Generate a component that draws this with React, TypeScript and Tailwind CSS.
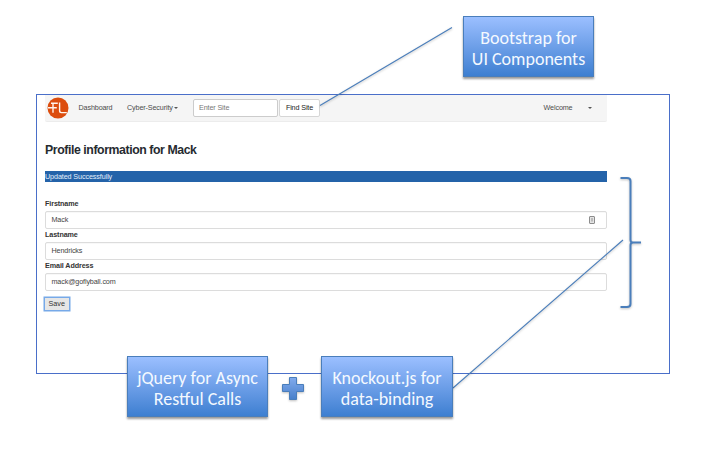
import type { ReactNode } from "react";

function Callout({ className, children }: { className: string; children: ReactNode }) {
  return (
    <div
      className={`absolute flex h-[61px] flex-col items-center justify-center border border-[#4a7ebb] bg-linear-to-b from-[#9bbfff] to-[#3d7fd1] pt-[4px] font-['Carlito','Calibri','Lato',sans-serif] text-[18px] leading-[21px] whitespace-nowrap text-[#f4f9ff] shadow-[0_1.5px_2px_rgba(0,0,0,0.4)] ${className}`}
    >
      {children}
    </div>
  );
}

function Field({ label, value, icon }: { label: string; value: string; icon?: boolean }) {
  return (
    <div className="flex h-[31px] flex-col">
      <label className="h-[13px] text-[7.2px] leading-[11px] font-bold tracking-[-0.1px] text-[#333]">{label}</label>
      <div className="flex h-[18px] items-center justify-between rounded-[2px] border border-[#dcdcdc] pr-[11px] pl-[5.5px] text-[7.2px] tracking-[-0.13px] text-[#444] shadow-[inset_0_0.5px_0.5px_rgba(0,0,0,0.06)]">
        <span>{value}</span>
        {icon && (
          <svg width="6" height="8" viewBox="0 0 6 8">
            <rect x="0.5" y="0.5" width="5" height="7" rx="0.5" fill="#e4e4e4" stroke="#8d8d8d" />
            <path d="M3 2v3.5" stroke="#888" strokeWidth="0.9" />
          </svg>
        )}
      </div>
    </div>
  );
}

function Caret() {
  return <span className="border-x-[2px] border-t-[2px] border-x-transparent border-t-[#555]" />;
}

function Logo() {
  return (
    <svg width="22" height="22" viewBox="0 0 22 22" className="shrink-0">
      <circle cx="11" cy="11" r="10.5" fill="#dc4d0e" />
      <path
        d="M4 6.3H10.8M6 6.3V15.8M1 10.8H9.8M12.6 5.4V13.8Q12.6 15.6 14.4 15.6H19.8"
        fill="none"
        stroke="#fff4ec"
        strokeWidth="1.4"
      />
    </svg>
  );
}

export default function App() {
  return (
    <main className="relative h-[450px] w-[720px] overflow-hidden bg-white pt-[94px] pl-[36px] font-['Liberation_Sans',Arial,sans-serif]">
      <section className="h-[280px] w-[634px] border border-[#4a6fc9] pr-[62px] pl-[8px]">
        <nav className="flex h-[27px] items-center rounded-b-[2px] border-b border-[#ececec] bg-[#f5f5f5] pr-[15px] pl-[2px] text-[7.2px] tracking-[-0.13px] text-[#4c4c4c]">
          <Logo />
          <span className="ml-[9.5px] w-[48.5px]">Dashboard</span>
          <span className="flex w-[66px] items-center gap-[1px]">
            Cyber-Security
            <Caret />
          </span>
          <div className="flex h-[18px] w-[85px] items-center rounded-[2px] border border-[#ccc] bg-white pl-[5px] text-[#777]">
            Enter Site
          </div>
          <button className="ml-[1px] h-[18px] w-[41px] rounded-[2px] border border-[#d6d6d6] bg-white text-[7.2px] text-[#222]">
            Find Site
          </button>
          <span className="ml-auto flex items-center gap-[15.5px]">
            Welcome
            <Caret />
          </span>
        </nav>
        <h1 className="mt-[19px] h-[30px] text-[12.3px] leading-[18px] font-bold tracking-[-0.42px] text-[#262b30]">
          Profile information for Mack
        </h1>
        <div className="h-[11px] bg-[#2463a9] text-[7.2px] leading-[11px] tracking-[-0.1px] text-[#e4effc]">
          Updated Successfully
        </div>
        <form className="pt-[16px]">
          <Field label="Firstname" value="Mack" icon />
          <Field label="Lastname" value="Hendricks" />
          <Field label="Email Address" value="mack@goflyball.com" />
          <button
            type="button"
            className="mt-[6.5px] block h-[12.5px] w-[23.5px] bg-[#e6e6e6] text-[7.2px] leading-[12px] text-[#333] shadow-[0_0_0_1.5px_#77a9e8]"
          >
            Save
          </button>
        </form>
      </section>

      <svg
        className="absolute inset-0 drop-shadow-[0_1px_1px_rgba(0,0,0,0.25)]"
        width="720"
        height="450"
        viewBox="0 0 720 450"
        fill="none"
        stroke="#4a7ebb"
      >
        <path d="M320 105.5L452 27.5M453 388L623 240" strokeWidth="1.1" />
        <path
          d="M620.5 178H627Q630.5 178 630.5 181V240Q630.5 242.5 633 242.5H641M641 242.5H633Q630.5 242.5 630.5 245V304Q630.5 307 627 307H620.5"
          strokeWidth="2"
        />
        <defs>
          <linearGradient id="plusFill" x1="0" y1="0" x2="0" y2="1">
            <stop stopColor="#82abed" />
            <stop offset="1" stopColor="#477fca" />
          </linearGradient>
        </defs>
        <path
          d="M289.5 377.5h7v7h7v7h-7v8h-7v-8h-7v-7h7z"
          fill="url(#plusFill)"
          strokeWidth="1"
        />
      </svg>

      <Callout className="top-[356px] left-[127px] w-[141px]">
        <span>jQuery for Async</span>
        <span>Restful Calls</span>
      </Callout>
      <Callout className="top-[356px] left-[321px] w-[132px]">
        <span>Knockout.js for</span>
        <span>data-binding</span>
      </Callout>
      <Callout className="top-[16px] left-[463px] w-[131px]">
        <span>Bootstrap for</span>
        <span>UI Components</span>
      </Callout>
    </main>
  );
}
